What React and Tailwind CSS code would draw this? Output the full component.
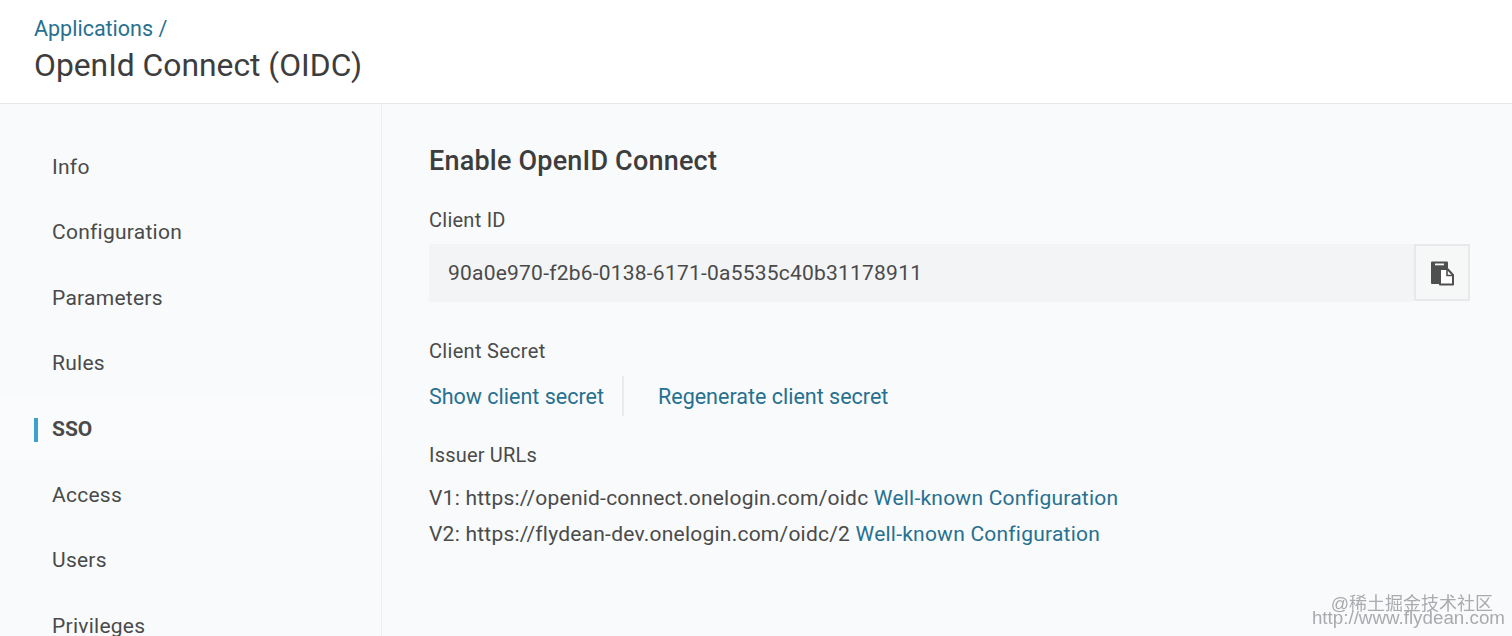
const NAV = ['Info', 'Configuration', 'Parameters', 'Rules', 'SSO', 'Access', 'Users', 'Privileges']

function NavItem({ label, active }) {
  return (
    <div className={`h-[65.6px] flex items-center pl-[34px] ${active ? 'bg-[#fafbfc]' : ''}`}>
      <span className={`w-[4px] h-[24px] mr-[14px] ${active ? 'bg-[#3ea0cf]' : ''}`} />
      <span className={`text-[21px] tracking-[0.26px] text-[#4a4a4a] ${active ? 'font-bold tracking-normal' : ''}`}>{label}</span>
    </div>
  )
}

function CopyIcon() {
  return (
    <svg width="26" height="26" viewBox="0 0 26 26">
      <path d="M2 2.5a1 1 0 0 1 1-1h15a1 1 0 0 1 1 1V8h-5v16H3a1 1 0 0 1-1-1z" fill="#4f4f4f" />
      <rect x="6" y="3.5" width="9" height="1.8" fill="#f5f6f6" />
      <path d="M11 9h7.5l5.5 6v9.5H11z" fill="#fff" stroke="#4f4f4f" strokeWidth="2" strokeLinejoin="round" />
      <path d="M18 9v6.5h6" fill="none" stroke="#4f4f4f" strokeWidth="1.6" />
    </svg>
  )
}

function Link({ children }) {
  return <span className="text-[#27708f]">{children}</span>
}

export default function App() {
  return (
    <div className="h-[636px] overflow-hidden relative bg-[#f8fafb] font-['Roboto',sans-serif] text-[#4a4a4a]">
      <header className="h-[104px] bg-white border-b border-[#e6e7e8] pl-[34px] pt-[14px]">
        <div className="text-[21.5px] leading-[30px] text-[#27708f]">Applications /</div>
        <h1 className="text-[31.8px] leading-[44px] text-[#3d3d3d] -mt-[1px]">OpenId Connect (OIDC)</h1>
      </header>

      <div className="flex">
        <nav className="w-[382px] shrink-0 border-r border-[#eeeff1] pt-[30.5px] h-[532px]">
          {NAV.map((n) => <NavItem key={n} label={n} active={n === 'SSO'} />)}
        </nav>

        <main className="flex-1 pl-[47px] pr-[42px] pt-[39px]">
          <h2 className="text-[27px] leading-[36px] font-medium tracking-[0.2px] text-[#3d3d3d]">Enable OpenID Connect</h2>

          <div className="text-[20px] leading-[28px] tracking-[0.25px] mt-[27px]">Client ID</div>
          <div className="flex mt-[10px] h-[58px]">
            <div className="flex-1 bg-[#f3f4f5] flex items-center pl-[19px] pt-[1px] text-[21px] tracking-[0.22px]">
              90a0e970-f2b6-0138-6171-0a5535c40b31178911
            </div>
            <button className="w-[56px] h-[57px] bg-[#f6f7f7] border-2 border-[#e8e9ea] flex items-center justify-center">
              <CopyIcon />
            </button>
          </div>

          <div className="text-[20px] leading-[28px] tracking-[0.3px] mt-[35px]">Client Secret</div>
          <div className="flex items-center mt-[11px] text-[21.5px] h-[40px]">
            <span className="pt-[2px]"><Link>Show client secret</Link></span>
            <span className="w-[2px] h-[40px] bg-[#e9eaeb] ml-[18px] mr-[34px]" />
            <span className="pt-[2px]"><Link>Regenerate client secret</Link></span>
          </div>

          <div className="text-[20px] leading-[28px] tracking-[0.2px] mt-[25px]">Issuer URLs</div>
          <div className="text-[21px] leading-[36px] tracking-[0.23px] mt-[11px]">
            <div>V1: https://openid-connect.onelogin.com/oidc <Link>Well-known Configuration</Link></div>
            <div>V2: https://flydean-dev.onelogin.com/oidc/2 <Link>Well-known Configuration</Link></div>
          </div>
        </main>
      </div>

      <div className="absolute right-[7px] bottom-[9px] text-right text-[#a9abae] leading-[19px] blur-[0.5px] font-['Liberation_Sans','Noto_Sans_CJK_SC',sans-serif]">
        <div className="text-[18px] pr-[12px]">@稀土掘金技术社区</div>
        <div className="text-[18.8px] -mt-[6px]">http://www.flydean.com</div>
      </div>
    </div>
  )
}
